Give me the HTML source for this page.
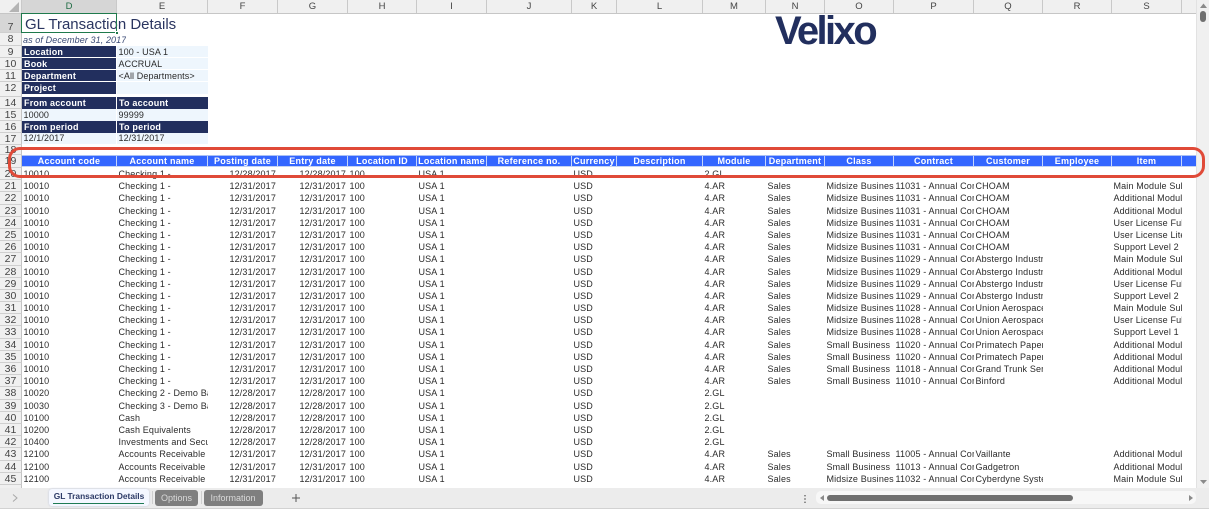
<!DOCTYPE html>
<html><head><meta charset="utf-8"><title>GL Transaction Details</title>
<style>
html,body{margin:0;padding:0;background:#fff}
#p{position:relative;width:1209px;height:509px;overflow:hidden;background:#fff;font:9px/12.2px "Liberation Sans",sans-serif;color:#2b2b2b;filter:blur(.3px)}
.ab{position:absolute;white-space:nowrap;overflow:hidden}
#ch{position:absolute;left:0;top:0;width:1196px;height:14px;background:#f0f0f0;border-bottom:1px solid #c6c6c6;box-sizing:border-box;display:flex;font-size:9.5px;line-height:14px;color:#444;text-align:center}
#ch i{font-style:normal;box-sizing:border-box;border-right:1px solid #c9c9c9;display:block}
.rh{position:absolute;left:0;width:22px;background:#f0f0f0;border-right:1px solid #c4c4c4;border-bottom:1px solid #cfcfcf;box-sizing:border-box;text-align:center;font-size:10.5px;color:#444;overflow:hidden}
.nv{background:#222f5e;color:#fff;font-weight:bold;padding-left:2px;box-sizing:border-box;letter-spacing:.2px}
.lt{background:#eef6fd;color:#2b2b2b;padding-left:1.5px;box-sizing:border-box;letter-spacing:.1px}
#hd{position:absolute;left:22px;top:155px;width:1174px;height:12px;background:#3366ff;border-top:1px solid #a9c0f5;border-bottom:1px solid #c4d2f2;box-sizing:border-box;display:flex;color:#fff;font-weight:bold;text-align:center;line-height:11px;letter-spacing:.25px}
#hd i{font-style:normal;display:block;box-sizing:border-box;border-right:1px solid #c4d4fb;overflow:hidden;white-space:nowrap}
#b{position:absolute;left:0;top:168px;width:1196px;letter-spacing:.15px}
.r{display:flex;height:12.2px;line-height:12.2px;white-space:nowrap}
.r i{font-style:normal;display:block;box-sizing:border-box;overflow:hidden;padding-left:1.5px;flex:none}
.r i:nth-child(1){width:22px;padding:0;background:#f0f0f0;border-right:1px solid #c4c4c4;border-bottom:1px solid #cfcfcf;text-align:center;font-size:10.5px;color:#444;letter-spacing:0}
.r i:nth-child(2){width:95px}
.r i:nth-child(3){width:91px}
.r i:nth-child(4){width:70px;text-align:right;padding:0 2px 0 0}
.r i:nth-child(5){width:70px;text-align:right;padding:0 2px 0 0}
.r i:nth-child(6){width:69px}
.r i:nth-child(7){width:70px}
.r i:nth-child(8){width:85px}
.r i:nth-child(9){width:45px}
.r i:nth-child(10){width:86px}
.r i:nth-child(11){width:63px}
.r i:nth-child(12){width:59px}
.r i:nth-child(13){width:69px}
.r i:nth-child(14){width:80px}
.r i:nth-child(15){width:69px}
.r i:nth-child(16){width:69px}
.r i:nth-child(17){width:70px}
</style></head><body><div id="p">

<div id="ch">
<i style="width:22px;position:relative"><svg width="10" height="10" style="position:absolute;left:9px;top:2px"><path d="M10 0V10H0Z" fill="#b4b4b4"/></svg></i>
<i style="width:95px;background:#d6d6d6;color:#1f6b43">D</i><i style="width:91px">E</i><i style="width:70px">F</i><i style="width:70px">G</i><i style="width:69px">H</i><i style="width:70px">I</i><i style="width:85px">J</i><i style="width:45px">K</i><i style="width:86px">L</i><i style="width:63px">M</i><i style="width:59px">N</i><i style="width:69px">O</i><i style="width:80px">P</i><i style="width:69px">Q</i><i style="width:69px">R</i><i style="width:70px">S</i><i style="width:14px;border:0"></i>
</div>

<div class="rh" style="top:14px;height:19px;line-height:27px;background:#d6d6d6">7</div>
<div class="rh" style="top:33px;height:13px;line-height:13px">8</div>
<div class="rh" style="top:46px;height:12px;line-height:12px">9</div>
<div class="rh" style="top:58px;height:12px;line-height:12px">10</div>
<div class="rh" style="top:70px;height:12px;line-height:12px">11</div>
<div class="rh" style="top:82px;height:15px;line-height:12px">12</div>
<div class="rh" style="top:97px;height:12px;line-height:12px">14</div>
<div class="rh" style="top:109px;height:12px;line-height:12px">15</div>
<div class="rh" style="top:121px;height:12px;line-height:12px">16</div>
<div class="rh" style="top:133px;height:12px;line-height:12px">17</div>
<div class="rh" style="top:145px;height:10px;line-height:10px">18</div>
<div class="rh" style="top:155px;height:13px;line-height:13px">19</div>

<div class="ab" style="left:25px;top:15px;font-size:15px;line-height:20px;color:#2a3560;overflow:visible">GL Transaction Details</div>
<div class="ab" style="left:21px;top:13px;width:96px;height:20px;border:1px solid #1f7a4c;box-sizing:border-box;overflow:visible"></div>
<div class="ab" style="left:115px;top:31px;width:4px;height:4px;background:#1f7a4c;border:1px solid #fff;box-sizing:border-box"></div>
<div class="ab" style="left:23px;top:34px;font-style:italic;color:#3a4a75;line-height:12px;letter-spacing:.1px">as of December 31, 2017</div>

<div class="ab nv" style="left:22px;top:46px;width:94px;height:11px;line-height:12px">Location</div>
<div class="ab nv" style="left:22px;top:58px;width:94px;height:11px;line-height:12px">Book</div>
<div class="ab nv" style="left:22px;top:70px;width:94px;height:11px;line-height:12px">Department</div>
<div class="ab nv" style="left:22px;top:82px;width:94px;height:12px;line-height:12px">Project</div>
<div class="ab lt" style="left:117px;top:46px;width:91px;height:11px;line-height:12px">100 - USA 1</div>
<div class="ab lt" style="left:117px;top:58px;width:91px;height:11px;line-height:12px">ACCRUAL</div>
<div class="ab lt" style="left:117px;top:70px;width:91px;height:11px;line-height:12px">&lt;All Departments&gt;</div>
<div class="ab lt" style="left:117px;top:82px;width:91px;height:12px"></div>

<div class="ab nv" style="left:22px;top:97px;width:94px;height:12px;line-height:12px">From account</div>
<div class="ab nv" style="left:117px;top:97px;width:91px;height:12px;line-height:12px">To account</div>
<div class="ab lt" style="left:22px;top:109px;width:94px;height:12px;line-height:12px">10000</div>
<div class="ab lt" style="left:117px;top:109px;width:91px;height:12px;line-height:12px">99999</div>
<div class="ab nv" style="left:22px;top:121px;width:94px;height:12px;line-height:12px">From period</div>
<div class="ab nv" style="left:117px;top:121px;width:91px;height:12px;line-height:12px">To period</div>
<div class="ab lt" style="left:22px;top:133px;width:94px;height:11px;line-height:11px">12/1/2017</div>
<div class="ab lt" style="left:117px;top:133px;width:91px;height:11px;line-height:11px">12/31/2017</div>

<div class="ab" style="left:775px;top:9px;font-size:40px;line-height:44px;font-weight:bold;color:#222f5e;letter-spacing:-2.6px;overflow:visible">Velixo</div>

<div id="hd"><i style="width:95px">Account code</i><i style="width:91px">Account name</i><i style="width:70px">Posting date</i><i style="width:70px">Entry date</i><i style="width:69px">Location ID</i><i style="width:70px">Location name</i><i style="width:85px">Reference no.</i><i style="width:45px">Currency</i><i style="width:86px">Description</i><i style="width:63px">Module</i><i style="width:59px">Department</i><i style="width:69px">Class</i><i style="width:80px">Contract</i><i style="width:69px">Customer</i><i style="width:69px">Employee</i><i style="width:70px">Item</i><i style="width:14px;border:0"></i></div>

<div id="b">
<div class="r"><i>20</i><i>10010</i><i>Checking 1 -</i><i>12/28/2017</i><i>12/28/2017</i><i>100</i><i>USA 1</i><i></i><i>USD</i><i></i><i>2.GL</i><i></i><i></i><i></i><i></i><i></i><i></i></div>
<div class="r"><i>21</i><i>10010</i><i>Checking 1 -</i><i>12/31/2017</i><i>12/31/2017</i><i>100</i><i>USA 1</i><i></i><i>USD</i><i></i><i>4.AR</i><i>Sales</i><i>Midsize Business</i><i>11031 - Annual Contract</i><i>CHOAM</i><i></i><i>Main Module Subscription</i></div>
<div class="r"><i>22</i><i>10010</i><i>Checking 1 -</i><i>12/31/2017</i><i>12/31/2017</i><i>100</i><i>USA 1</i><i></i><i>USD</i><i></i><i>4.AR</i><i>Sales</i><i>Midsize Business</i><i>11031 - Annual Contract</i><i>CHOAM</i><i></i><i>Additional Module</i></div>
<div class="r"><i>23</i><i>10010</i><i>Checking 1 -</i><i>12/31/2017</i><i>12/31/2017</i><i>100</i><i>USA 1</i><i></i><i>USD</i><i></i><i>4.AR</i><i>Sales</i><i>Midsize Business</i><i>11031 - Annual Contract</i><i>CHOAM</i><i></i><i>Additional Module</i></div>
<div class="r"><i>24</i><i>10010</i><i>Checking 1 -</i><i>12/31/2017</i><i>12/31/2017</i><i>100</i><i>USA 1</i><i></i><i>USD</i><i></i><i>4.AR</i><i>Sales</i><i>Midsize Business</i><i>11031 - Annual Contract</i><i>CHOAM</i><i></i><i>User License Full</i></div>
<div class="r"><i>25</i><i>10010</i><i>Checking 1 -</i><i>12/31/2017</i><i>12/31/2017</i><i>100</i><i>USA 1</i><i></i><i>USD</i><i></i><i>4.AR</i><i>Sales</i><i>Midsize Business</i><i>11031 - Annual Contract</i><i>CHOAM</i><i></i><i>User License Lite</i></div>
<div class="r"><i>26</i><i>10010</i><i>Checking 1 -</i><i>12/31/2017</i><i>12/31/2017</i><i>100</i><i>USA 1</i><i></i><i>USD</i><i></i><i>4.AR</i><i>Sales</i><i>Midsize Business</i><i>11031 - Annual Contract</i><i>CHOAM</i><i></i><i>Support Level 2</i></div>
<div class="r"><i>27</i><i>10010</i><i>Checking 1 -</i><i>12/31/2017</i><i>12/31/2017</i><i>100</i><i>USA 1</i><i></i><i>USD</i><i></i><i>4.AR</i><i>Sales</i><i>Midsize Business</i><i>11029 - Annual Contract</i><i>Abstergo Industries</i><i></i><i>Main Module Subscription</i></div>
<div class="r"><i>28</i><i>10010</i><i>Checking 1 -</i><i>12/31/2017</i><i>12/31/2017</i><i>100</i><i>USA 1</i><i></i><i>USD</i><i></i><i>4.AR</i><i>Sales</i><i>Midsize Business</i><i>11029 - Annual Contract</i><i>Abstergo Industries</i><i></i><i>Additional Module</i></div>
<div class="r"><i>29</i><i>10010</i><i>Checking 1 -</i><i>12/31/2017</i><i>12/31/2017</i><i>100</i><i>USA 1</i><i></i><i>USD</i><i></i><i>4.AR</i><i>Sales</i><i>Midsize Business</i><i>11029 - Annual Contract</i><i>Abstergo Industries</i><i></i><i>User License Full</i></div>
<div class="r"><i>30</i><i>10010</i><i>Checking 1 -</i><i>12/31/2017</i><i>12/31/2017</i><i>100</i><i>USA 1</i><i></i><i>USD</i><i></i><i>4.AR</i><i>Sales</i><i>Midsize Business</i><i>11029 - Annual Contract</i><i>Abstergo Industries</i><i></i><i>Support Level 2</i></div>
<div class="r"><i>31</i><i>10010</i><i>Checking 1 -</i><i>12/31/2017</i><i>12/31/2017</i><i>100</i><i>USA 1</i><i></i><i>USD</i><i></i><i>4.AR</i><i>Sales</i><i>Midsize Business</i><i>11028 - Annual Contract</i><i>Union Aerospace</i><i></i><i>Main Module Subscription</i></div>
<div class="r"><i>32</i><i>10010</i><i>Checking 1 -</i><i>12/31/2017</i><i>12/31/2017</i><i>100</i><i>USA 1</i><i></i><i>USD</i><i></i><i>4.AR</i><i>Sales</i><i>Midsize Business</i><i>11028 - Annual Contract</i><i>Union Aerospace</i><i></i><i>User License Full</i></div>
<div class="r"><i>33</i><i>10010</i><i>Checking 1 -</i><i>12/31/2017</i><i>12/31/2017</i><i>100</i><i>USA 1</i><i></i><i>USD</i><i></i><i>4.AR</i><i>Sales</i><i>Midsize Business</i><i>11028 - Annual Contract</i><i>Union Aerospace</i><i></i><i>Support Level 1</i></div>
<div class="r"><i>34</i><i>10010</i><i>Checking 1 -</i><i>12/31/2017</i><i>12/31/2017</i><i>100</i><i>USA 1</i><i></i><i>USD</i><i></i><i>4.AR</i><i>Sales</i><i>Small Business</i><i>11020 - Annual Contract</i><i>Primatech Paper</i><i></i><i>Additional Module</i></div>
<div class="r"><i>35</i><i>10010</i><i>Checking 1 -</i><i>12/31/2017</i><i>12/31/2017</i><i>100</i><i>USA 1</i><i></i><i>USD</i><i></i><i>4.AR</i><i>Sales</i><i>Small Business</i><i>11020 - Annual Contract</i><i>Primatech Paper</i><i></i><i>Additional Module</i></div>
<div class="r"><i>36</i><i>10010</i><i>Checking 1 -</i><i>12/31/2017</i><i>12/31/2017</i><i>100</i><i>USA 1</i><i></i><i>USD</i><i></i><i>4.AR</i><i>Sales</i><i>Small Business</i><i>11018 - Annual Contract</i><i>Grand Trunk Services</i><i></i><i>Additional Module</i></div>
<div class="r"><i>37</i><i>10010</i><i>Checking 1 -</i><i>12/31/2017</i><i>12/31/2017</i><i>100</i><i>USA 1</i><i></i><i>USD</i><i></i><i>4.AR</i><i>Sales</i><i>Small Business</i><i>11010 - Annual Contract</i><i>Binford</i><i></i><i>Additional Module</i></div>
<div class="r"><i>38</i><i>10020</i><i>Checking 2 - Demo Bank</i><i>12/28/2017</i><i>12/28/2017</i><i>100</i><i>USA 1</i><i></i><i>USD</i><i></i><i>2.GL</i><i></i><i></i><i></i><i></i><i></i><i></i></div>
<div class="r"><i>39</i><i>10030</i><i>Checking 3 - Demo Bank</i><i>12/28/2017</i><i>12/28/2017</i><i>100</i><i>USA 1</i><i></i><i>USD</i><i></i><i>2.GL</i><i></i><i></i><i></i><i></i><i></i><i></i></div>
<div class="r"><i>40</i><i>10100</i><i>Cash</i><i>12/28/2017</i><i>12/28/2017</i><i>100</i><i>USA 1</i><i></i><i>USD</i><i></i><i>2.GL</i><i></i><i></i><i></i><i></i><i></i><i></i></div>
<div class="r"><i>41</i><i>10200</i><i>Cash Equivalents</i><i>12/28/2017</i><i>12/28/2017</i><i>100</i><i>USA 1</i><i></i><i>USD</i><i></i><i>2.GL</i><i></i><i></i><i></i><i></i><i></i><i></i></div>
<div class="r"><i>42</i><i>10400</i><i>Investments and Securities</i><i>12/28/2017</i><i>12/28/2017</i><i>100</i><i>USA 1</i><i></i><i>USD</i><i></i><i>2.GL</i><i></i><i></i><i></i><i></i><i></i><i></i></div>
<div class="r"><i>43</i><i>12100</i><i>Accounts Receivable</i><i>12/31/2017</i><i>12/31/2017</i><i>100</i><i>USA 1</i><i></i><i>USD</i><i></i><i>4.AR</i><i>Sales</i><i>Small Business</i><i>11005 - Annual Contract</i><i>Vaillante</i><i></i><i>Additional Module</i></div>
<div class="r"><i>44</i><i>12100</i><i>Accounts Receivable</i><i>12/31/2017</i><i>12/31/2017</i><i>100</i><i>USA 1</i><i></i><i>USD</i><i></i><i>4.AR</i><i>Sales</i><i>Small Business</i><i>11013 - Annual Contract</i><i>Gadgetron</i><i></i><i>Additional Module</i></div>
<div class="r"><i>45</i><i>12100</i><i>Accounts Receivable</i><i>12/31/2017</i><i>12/31/2017</i><i>100</i><i>USA 1</i><i></i><i>USD</i><i></i><i>4.AR</i><i>Sales</i><i>Midsize Business</i><i>11032 - Annual Contract</i><i>Cyberdyne Systems</i><i></i><i>Main Module Subscription</i></div>
</div>
<div class="rh" style="top:485px;height:4px"></div>

<!-- vertical scrollbar -->
<div class="ab" style="left:1196px;top:0;width:13px;height:488px;background:#f0f0f0;border-left:1px solid #e2e2e2;box-sizing:border-box"></div>
<div class="ab" style="left:1200px;top:11px;width:6px;height:11px;border-radius:3px;background:#6f6f6f"></div>
<svg class="ab" style="left:1199px;top:3px" width="9" height="6"><path d="M4.5 0.5L8 5H1Z" fill="#8a8a8a"/></svg>
<svg class="ab" style="left:1199px;top:479px" width="9" height="6"><path d="M4.5 5L8 1H1Z" fill="#8a8a8a"/></svg>

<!-- bottom bar -->
<div class="ab" style="left:0;top:488px;width:1209px;height:21px;background:#ececec;border-bottom:1px solid #d2d2d2;box-sizing:border-box"></div>
<svg class="ab" style="left:11px;top:493px" width="8" height="10"><path d="M2 1.5L6 5L2 8.5" fill="none" stroke="#a8a8a8" stroke-width="1"/></svg>
<div class="ab" style="left:49px;top:489px;width:100px;height:17px;background:#f4f7ff;border-radius:3px;box-shadow:0 0 2px #c3c9dc;text-align:center;font-weight:bold;color:#2c3a66;line-height:15px;font-size:8.4px">GL Transaction Details</div>
<div class="ab" style="left:53px;top:502.5px;width:91px;height:1.5px;background:#1e7b54"></div>
<div class="ab" style="left:155px;top:490px;width:43px;height:16px;background:#7f7f7f;border-radius:3px;text-align:center;color:#d9d9d9;line-height:16px">Options</div>
<div class="ab" style="left:203.5px;top:490px;width:59px;height:16px;background:#7f7f7f;border-radius:3px;text-align:center;color:#d9d9d9;line-height:16px">Information</div>
<div class="ab" style="left:151.5px;top:491px;width:1px;height:13px;background:#cfcfcf"></div>
<div class="ab" style="left:200.5px;top:491px;width:1px;height:13px;background:#cfcfcf"></div>
<svg class="ab" style="left:291px;top:493px" width="10" height="10"><path d="M5 1V9M1 5H9" stroke="#555" stroke-width="1" fill="none"/></svg>
<svg class="ab" style="left:803px;top:494px" width="4" height="10"><path d="M2 1V2.4M2 4.3V5.7M2 7.6V9" stroke="#666" stroke-width="1.4" fill="none"/></svg>
<div class="ab" style="left:816px;top:491px;width:380px;height:13px;border-radius:5px;background:#f7f7f7"></div>
<div class="ab" style="left:827px;top:495px;width:246px;height:6px;border-radius:3px;background:#6f6f6f"></div>
<svg class="ab" style="left:819px;top:494px" width="6" height="8"><path d="M1 4L5 1V7Z" fill="#8a8a8a"/></svg>
<svg class="ab" style="left:1188px;top:494px" width="6" height="8"><path d="M5 4L1 1V7Z" fill="#8a8a8a"/></svg>

<!-- red highlight -->
<div class="ab" style="left:8px;top:146.5px;width:1197px;height:31.5px;border:3.5px solid #e04a38;border-radius:12px;box-sizing:border-box"></div>
</div></body></html>
